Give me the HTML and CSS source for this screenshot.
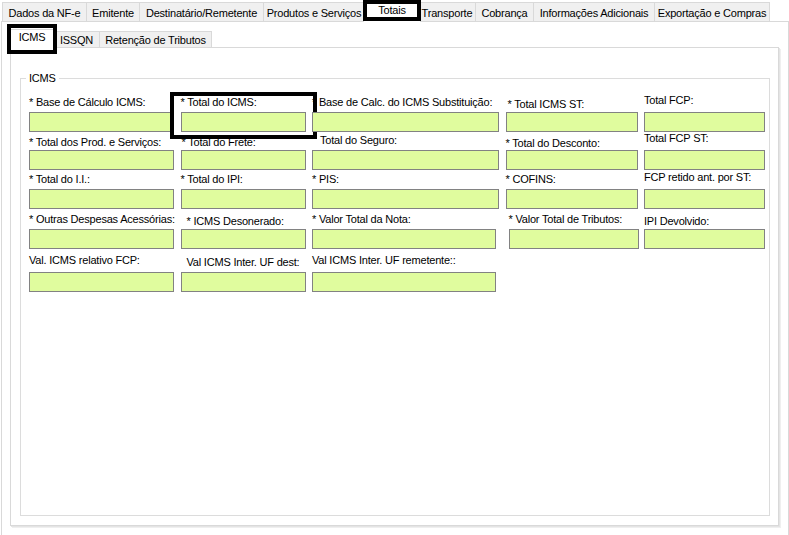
FILE: index.html
```html
<!DOCTYPE html>
<html lang="pt-BR">
  <head>
    <meta charset="UTF-8" />
    <meta name="viewport" content="width=device-width, initial-scale=1.0" />
    <title>NF-e - Totais</title>
    <link rel="stylesheet" href="styles.css">
  </head>
  <body>
    <div class="tab-control">
      <div class="tab-strip main-strip">
        <div class="tab">Dados da NF-e</div>
        <div class="tab">Emitente</div>
        <div class="tab">Destinatário/Remetente</div>
        <div class="tab">Produtos e Serviços</div>
        <div class="tab selected marked">Totais</div>
        <div class="tab">Transporte</div>
        <div class="tab">Cobrança</div>
        <div class="tab">Informações Adicionais</div>
        <div class="tab">Exportação e Compras</div>
      </div>
      <div class="tab-page main-page">
        <div class="tab-strip sub-strip">
          <div class="tab selected marked">ICMS</div>
          <div class="tab">ISSQN</div>
          <div class="tab">Retenção de Tributos</div>
        </div>
        <div class="tab-page sub-page">
          <fieldset class="group">
            <legend>ICMS</legend>
            <div class="fields">
              <!-- linha 1 -->
              <div class="field"><label>* Base de Cálculo ICMS:</label><input type="text" /></div>
              <div class="field marked"><label>* Total do ICMS:</label><input type="text" /></div>
              <div class="field"><label>* Base de Calc. do ICMS Substituição:</label><input type="text" /></div>
              <div class="field"><label class="low in-2">* Total ICMS ST:</label><input type="text" /></div>
              <div class="field"><label class="high">Total FCP:</label><input type="text" /></div>

              <!-- linha 2 -->
              <div class="field"><label class="low">* Total dos Prod. e Serviços:</label><input type="text" /></div>
              <div class="field"><label class="low in-1">* Total do Frete:</label><input type="text" /></div>
              <div class="field"><label class="in-8">Total do Seguro:</label><input type="text" /></div>
              <div class="field"><label class="lower">* Total do Desconto:</label><input type="text" /></div>
              <div class="field"><label class="high">Total FCP ST:</label><input type="text" /></div>

              <!-- linha 3 -->
              <div class="field"><label>* Total do I.I.:</label><input type="text" /></div>
              <div class="field"><label>* Total do IPI:</label><input type="text" /></div>
              <div class="field"><label>* PIS:</label><input type="text" /></div>
              <div class="field"><label>* COFINS:</label><input type="text" /></div>
              <div class="field"><label class="high">FCP retido ant. por ST:</label><input type="text" /></div>

              <!-- linha 4 -->
              <div class="field"><label>* Outras Despesas Acessórias:</label><input type="text" /></div>
              <div class="field"><label class="low in-6">* ICMS Desonerado:</label><input type="text" /></div>
              <div class="field"><label>* Valor Total da Nota:</label><input class="narrow" type="text" /></div>
              <div class="field"><label class="in-3">* Valor Total de Tributos:</label><input class="nudge" type="text" /></div>
              <div class="field"><label class="low">IPI Devolvido:</label><input type="text" /></div>

              <!-- linha 5 -->
              <div class="field"><label class="high">Val. ICMS relativo FCP:</label><input type="text" /></div>
              <div class="field"><label class="in-6">Val ICMS Inter. UF dest:</label><input type="text" /></div>
              <div class="field"><label class="high">Val ICMS Inter. UF remetente::</label><input class="narrow" type="text" /></div>
            </div>
          </fieldset>
        </div>
      </div>
    </div>
  </body>
</html>
```

FILE: styles.css
```css
body {
  margin: 0;
  background: #fff;
  color: #000;
  font: 11px "Liberation Sans", Arial, sans-serif;
  letter-spacing: -0.2px;
  overflow: hidden;
}

/* abas */
.tab-strip {
  display: flex;
  align-items: flex-end;
}
.tab {
  box-sizing: border-box;
  flex: none;
  padding: 0;
  border: 1px solid #d9d9d9;
  border-bottom: none;
  background: #f0f0f0;
  text-align: center;
  white-space: nowrap;
}
.tab + .tab {
  border-left: none;
}
.tab.selected {
  position: relative;
  z-index: 1;
  margin: 0 -2px -1px;
  border-left: 1px solid #d9d9d9;
  background: #fff;
}

.main-strip {
  height: 21px;
  padding-left: 2px;
}
.main-strip .tab {
  height: 19px;
  padding-top: 2px;
  line-height: 16px;
}
.main-strip .tab.selected {
  height: 22px;
  padding-top: 1px;
}
/* larguras das abas como no form original */
.main-strip .tab:nth-child(1) { width: 85px; }
.main-strip .tab:nth-child(2) { width: 53px; }
.main-strip .tab:nth-child(3) { width: 124px; }
.main-strip .tab:nth-child(4) { width: 101px; }
.main-strip .tab:nth-child(5) { width: 58px; }
.main-strip .tab:nth-child(6) { width: 57px; }
.main-strip .tab:nth-child(7) { width: 58px; }
.main-strip .tab:nth-child(8) { width: 121px; }
.main-strip .tab:nth-child(9) { width: 115px; }

.sub-strip {
  height: 25px;
  padding-left: 8px;
}
.sub-strip .tab {
  height: 16px;
  padding-top: 1px;
  line-height: 14px;
}
.sub-strip .tab.selected {
  height: 19px;
  padding-top: 0;
}
.sub-strip .tab:nth-child(1) { width: 48px; }
.sub-strip .tab:nth-child(2) { width: 46px; }
.sub-strip .tab:nth-child(3) { width: 112px; }

/* marcacoes pretas */
.marked::after {
  content: "";
  position: absolute;
  border: 4px solid #000;
  pointer-events: none;
}
.main-strip .marked::after {
  top: -1px;
  bottom: 1px;
  left: -1px;
  right: -1px;
}
.sub-strip .marked::after {
  top: -6px;
  bottom: -6px;
  left: -2px;
  right: -2px;
}

/* paginas */
.tab-page {
  box-sizing: border-box;
  border: 1px solid #d9d9d9;
  background: #fff;
}
.main-page {
  width: 788px;
  height: 530px;
  margin-left: 1px;
}
.sub-page {
  display: flex;
  flex-direction: column;
  width: 769px;
  height: 479px;
  margin-left: 8px;
  padding: 24px 8px 9px 9px;
  box-shadow: 1px 1px 0 #e4e4e4, 2px 2px 0 #efefef;
}

/* groupbox */
.group {
  flex: 1;
  min-width: 0;
  margin: 0;
  padding: 9px 8px 0 8px;
  border: 1px solid #dcdcdc;
}
.group legend {
  margin-left: -3px;
  padding: 0 3px;
  line-height: 13px;
}

.fields {
  display: grid;
  grid-template-columns: 145px 125px 187px 132px 121px;
  grid-template-rows: 38px 38px 39px 40px 43px;
  column-gap: 6.5px;
}
.field {
  position: relative;
  display: flex;
  flex-direction: column;
  justify-content: flex-end;
}
.field label {
  margin-bottom: 3px;
  line-height: 13px;
  white-space: nowrap;
}
.field label.low {
  margin-bottom: 1px;
}
.field label.lower {
  margin-bottom: 0;
}
.field label.high {
  margin-bottom: 5px;
}
.in-1 { padding-left: 1px; }
.in-2 { padding-left: 2px; }
.in-3 { padding-left: 3px; }
.in-6 { padding-left: 6px; }
.in-8 { padding-left: 8px; }

.field input {
  box-sizing: border-box;
  width: 100%;
  height: 20px;
  margin: 0;
  padding: 0 3px;
  border: 1px solid #828282;
  background: #e0fc9e;
  font: inherit;
  outline: none;
}
.field input.narrow {
  width: 184px;
}
.field input.nudge {
  width: 130px;
  margin-left: 3px;
}

.field.marked::after {
  top: -2px;
  bottom: -7px;
  left: -11px;
  right: -11px;
}
```
